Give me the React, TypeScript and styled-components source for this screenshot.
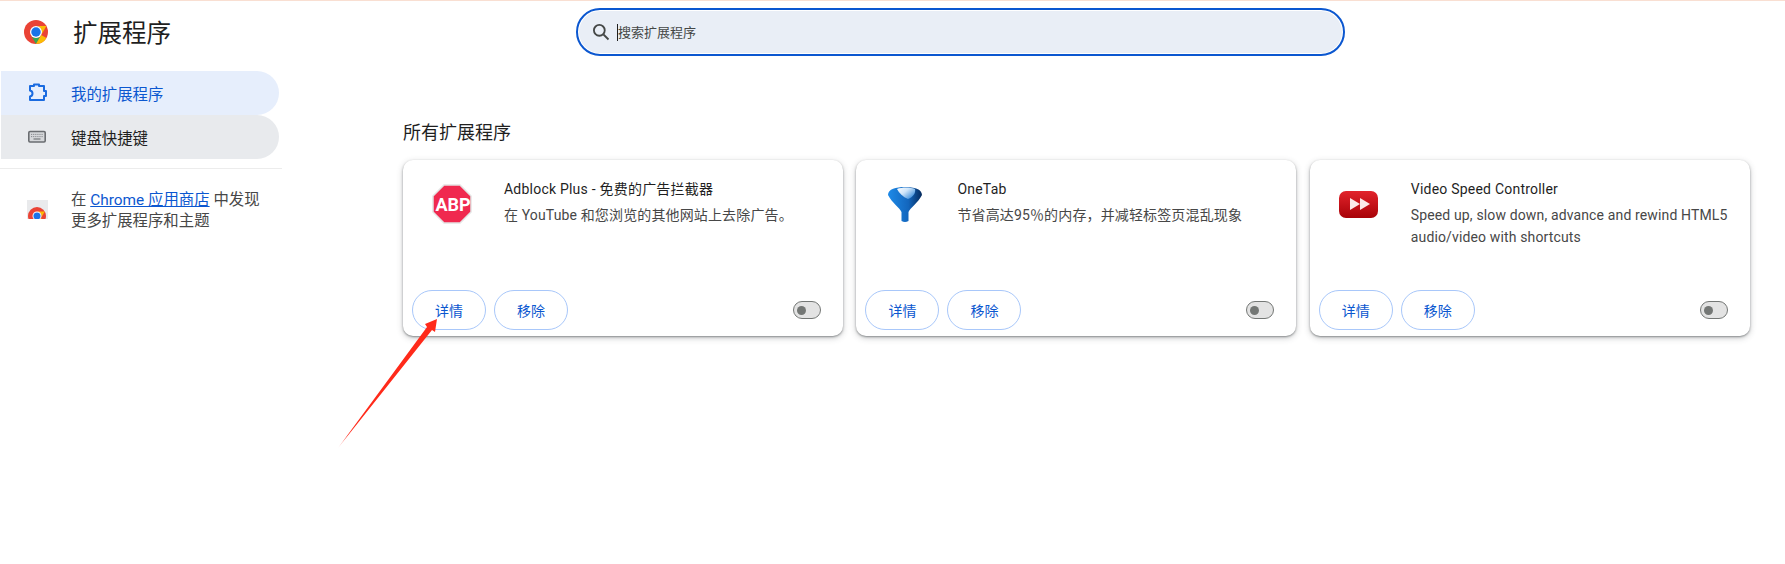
import React from "react";
import styled, { createGlobalStyle } from "styled-components";

const GlobalStyle = createGlobalStyle`
  html, body {
    margin: 0;
    padding: 0;
    background: #fff;
    font-family: Roboto, "Noto Sans CJK SC", sans-serif;
    color: #1f1f1f;
  }
`;

const Page = styled.div`
  position: relative;
  width: 1785px;
  height: 564px;
  overflow: hidden;
  border-top: 1px solid #f9dfd2;
  box-sizing: border-box;
`;

const Header = styled.header`
  display: flex;
  height: 70px;
`;

const Brand = styled.div`
  display: flex;
  align-items: center;
  gap: 25px;
  width: 576px;
  height: 62px;
  padding-left: 24px;
  box-sizing: border-box;
  font-size: 24.5px;

  span {
    padding-bottom: 2px;
  }
`;

const SearchBox = styled.div`
  display: flex;
  align-items: center;
  width: 769px;
  height: 48px;
  margin-top: 7px;
  padding-left: 13px;
  box-sizing: border-box;
  background: #e9eef6;
  border: 2px solid #0b57d0;
  box-shadow: inset 0 0 0 1px #fff;
  border-radius: 24px;
  font-size: 13px;
  color: #444746;

  span:last-child {
    padding-bottom: 2px;
  }
`;

const Caret = styled.span`
  width: 1px;
  height: 17px;
  margin: 0 0 0 6px;
  background: #1f1f1f;
`;

const Body = styled.div`
  display: flex;
`;

const Sidebar = styled.nav`
  width: 282px;
  margin-right: 121px;
`;

const NavItem = styled.div<{ $active?: boolean }>`
  display: flex;
  align-items: center;
  gap: 24px;
  width: 278px;
  height: 44px;
  margin-left: 1px;
  padding-left: 26px;
  box-sizing: border-box;
  border-radius: 0 22px 22px 0;
  font-size: 15.4px;
  background: ${(p) => (p.$active ? "#e6eefc" : "#e8eaed")};
  color: ${(p) => (p.$active ? "#0b57d0" : "#1f1f1f")};
`;

const Divider = styled.div`
  height: 1px;
  margin-top: 9px;
  background: #ececec;
`;

const Promo = styled.div`
  display: flex;
  gap: 23px;
  padding: 21px 0 0 27px;
  font-size: 15.4px;
  line-height: 21px;
  color: #474747;
`;

const PromoIcon = styled.div`
  position: relative;
  flex: none;
  width: 21px;
  height: 19px;
  margin-top: 10px;
  overflow: hidden;
  background: #e9eaec;
`;

const BagChrome = styled.div`
  position: absolute;
  left: 1px;
  top: 7px;
  line-height: 0;
`;

const PromoLink = styled.a`
  color: #0b57d0;
  text-decoration: underline;
`;

const Main = styled.main`
  flex: 1;
`;

const Heading = styled.h2`
  margin: 0;
  padding-top: 48px;
  height: 89px;
  box-sizing: border-box;
  font-size: 18px;
  line-height: 28px;
  font-weight: 400;
`;

const CardGrid = styled.div`
  display: grid;
  grid-template-columns: repeat(3, 440px);
  column-gap: 13.4px;
`;

const Card = styled.section`
  display: flex;
  flex-direction: column;
  height: 176px;
  box-sizing: border-box;
  background: #fff;
  border-radius: 10px;
  box-shadow: 0 1px 2px rgba(60, 64, 67, 0.5), 0 2px 6px rgba(60, 64, 67, 0.28);
`;

const CardTop = styled.div`
  display: flex;
  flex: 1;
  padding: 18px 20px 0 29px;
`;

const IconSlot = styled.div`
  flex: none;
  width: 40px;
  height: 40px;
  margin: 6px 32px 0 0;
`;

const CardName = styled.div`
  font-size: 14px;
  line-height: 22px;
  letter-spacing: 0.22px;
  color: #1f1f1f;
`;

const CardDesc = styled.div`
  margin-top: 4px;
  font-size: 14px;
  line-height: 22px;
  letter-spacing: 0.14px;
  color: #474747;
`;

const CardActions = styled.div`
  display: flex;
  align-items: center;
  gap: 8px;
  padding: 0 22px 6px 9px;
`;

const PillButton = styled.button`
  width: 74px;
  height: 40px;
  padding: 0;
  background: #fff;
  border: 1px solid #a8c7fa;
  border-radius: 20px;
  font: inherit;
  font-size: 14px;
  color: #0b57d0;
`;

const Toggle = styled.div`
  display: flex;
  align-items: center;
  width: 28px;
  height: 18px;
  margin-left: auto;
  padding-left: 3px;
  box-sizing: border-box;
  background: #e3e3e3;
  border: 1px solid #747775;
  border-radius: 9px;
`;

const Knob = styled.span`
  width: 9px;
  height: 9px;
  border-radius: 50%;
  background: #747775;
`;

const Arrow = styled.svg`
  position: absolute;
  left: 0;
  top: 0;
  pointer-events: none;
`;

const ChromeLogo = ({ size }: { size: number }) => (
  <svg width={size} height={size} viewBox="0 0 48 48">
    <circle cx="24" cy="24" r="24" fill="#ea4335" />
    <path d="M24 48 44.8 12 H24 A12 12 0 0 1 34.4 30 Z" fill="#fbbc04" />
    <path d="M3.2 12 24 48 34.4 30 A12 12 0 0 1 13.6 30 Z" fill="#34a853" />
    <path d="M44.8 36 A24 24 0 0 1 24 48 L34.4 30 Z" fill="#fbbc04" />
    <circle cx="24" cy="24" r="12" fill="#fff" />
    <circle cx="24" cy="24" r="9.5" fill="#1a73e8" />
  </svg>
);

const AbpIcon = () => (
  <svg width="40" height="40" viewBox="0 0 40 40">
    <polygon points="12,1 28,1 39,12 39,28 28,39 12,39 1,28 1,12" fill="#f0294f" stroke="#e4e4e4" strokeWidth="1.5" />
    <text x="3.5" y="27" fontFamily="Roboto, sans-serif" fontWeight="700" fontSize="18" fill="#fff">ABP</text>
  </svg>
);

const FunnelIcon = () => (
  <svg width="40" height="40" viewBox="0 0 40 40">
    <defs>
      <linearGradient id="funnelBody" x1="0" x2="1" y1="0" y2="0">
        <stop offset="0" stopColor="#1e8ae8" />
        <stop offset="0.6" stopColor="#1366bd" />
        <stop offset="1" stopColor="#052a5c" />
      </linearGradient>
      <linearGradient id="funnelShine" x1="0" x2="1" y1="0" y2="0.8">
        <stop offset="0" stopColor="#ffffff" />
        <stop offset="0.45" stopColor="#cfe5fa" />
        <stop offset="1" stopColor="#2f86d8" />
      </linearGradient>
    </defs>
    <path d="M3 11 C3 5 11 3 20 3 C29 3 37 5 37 11 C33 19 25 24 23.5 28 V37 Q20 39 16.5 37 V28 C15 24 7 19 3 11Z" fill="url(#funnelBody)" />
    <path d="M12 5 C17 3 25 3 30 5 C31 9 28 13 23 15 C18 13 14 9 12 5Z" fill="url(#funnelShine)" />
  </svg>
);

const SpeedIcon = () => (
  <svg width="40" height="40" viewBox="0 0 40 40">
    <defs>
      <linearGradient id="speedRed" x1="0" x2="0" y1="0" y2="1">
        <stop offset="0" stopColor="#e2232b" />
        <stop offset="1" stopColor="#a80208" />
      </linearGradient>
    </defs>
    <rect x="0" y="7" width="39" height="27" rx="7" fill="url(#speedRed)" />
    <polygon points="11,14 21,20 11,26" fill="#fbeaea" />
    <polygon points="21,14 31,20 21,26" fill="#fbeaea" />
  </svg>
);

const extensions = [
  {
    name: "Adblock Plus - 免费的广告拦截器",
    desc: "在 YouTube 和您浏览的其他网站上去除广告。",
    icon: <AbpIcon />,
  },
  {
    name: "OneTab",
    desc: "节省高达95％的内存，并减轻标签页混乱现象",
    icon: <FunnelIcon />,
  },
  {
    name: "Video Speed Controller",
    desc: "Speed up, slow down, advance and rewind HTML5 audio/video with shortcuts",
    icon: <SpeedIcon />,
  },
];

export default function App() {
  return (
    <Page>
      <GlobalStyle />
      <Header>
        <Brand>
          <ChromeLogo size={24} />
          <span>扩展程序</span>
        </Brand>
        <SearchBox>
          <svg width="20" height="20" viewBox="0 0 24 24" fill="none" stroke="#444746" strokeWidth="2.2">
            <circle cx="10" cy="10" r="6.5" />
            <path d="M15 15l6 6" />
          </svg>
          <Caret />
          <span>搜索扩展程序</span>
        </SearchBox>
      </Header>
      <Body>
        <Sidebar>
          <NavItem $active>
            <svg width="20" height="20" viewBox="0 0 20 20" fill="none" stroke="#1a6be0" strokeWidth="2" strokeLinejoin="round">
              <path d="M3 3H7V1.5H12V3H17V8H19V13H17V17H3V13.5Q5.5 13 5.5 10.5Q5.5 8 3 7.5Z" />
            </svg>
            <span>我的扩展程序</span>
          </NavItem>
          <NavItem>
            <svg width="20" height="20" viewBox="0 0 20 20" fill="none">
              <rect x="1.8" y="4.5" width="16.4" height="10.5" rx="1.2" fill="#d5d7da" stroke="#6a6d71" strokeWidth="1.6" />
              <path d="M4 7.4h12M4 9.6h12" stroke="#85888c" strokeWidth="1" strokeDasharray="1.2 0.9" />
              <path d="M6.5 12h7" stroke="#6a6d71" strokeWidth="1.1" />
            </svg>
            <span>键盘快捷键</span>
          </NavItem>
          <Divider />
          <Promo>
            <PromoIcon>
              <BagChrome>
                <ChromeLogo size={18} />
              </BagChrome>
            </PromoIcon>
            <div>
              在 <PromoLink>Chrome 应用商店</PromoLink> 中发现
              <br />
              更多扩展程序和主题
            </div>
          </Promo>
        </Sidebar>
        <Main>
          <Heading>所有扩展程序</Heading>
          <CardGrid>
            {extensions.map((ext) => (
              <Card key={ext.name}>
                <CardTop>
                  <IconSlot>{ext.icon}</IconSlot>
                  <div>
                    <CardName>{ext.name}</CardName>
                    <CardDesc>{ext.desc}</CardDesc>
                  </div>
                </CardTop>
                <CardActions>
                  <PillButton>详情</PillButton>
                  <PillButton>移除</PillButton>
                  <Toggle>
                    <Knob />
                  </Toggle>
                </CardActions>
              </Card>
            ))}
          </CardGrid>
        </Main>
      </Body>
      <Arrow width="1785" height="564" viewBox="0 0 1785 564">
        <defs>
          <linearGradient id="arrowFade" x1="338" y1="447" x2="430" y2="326" gradientUnits="userSpaceOnUse">
            <stop offset="0" stopColor="#ff2a1a" stopOpacity="0.25" />
            <stop offset="0.1" stopColor="#ff2a1a" />
            <stop offset="1" stopColor="#ff2a1a" />
          </linearGradient>
        </defs>
        <polygon points="338,447 427,326 425,323 437,318 435,331 432,329" fill="url(#arrowFade)" />
      </Arrow>
    </Page>
  );
}
